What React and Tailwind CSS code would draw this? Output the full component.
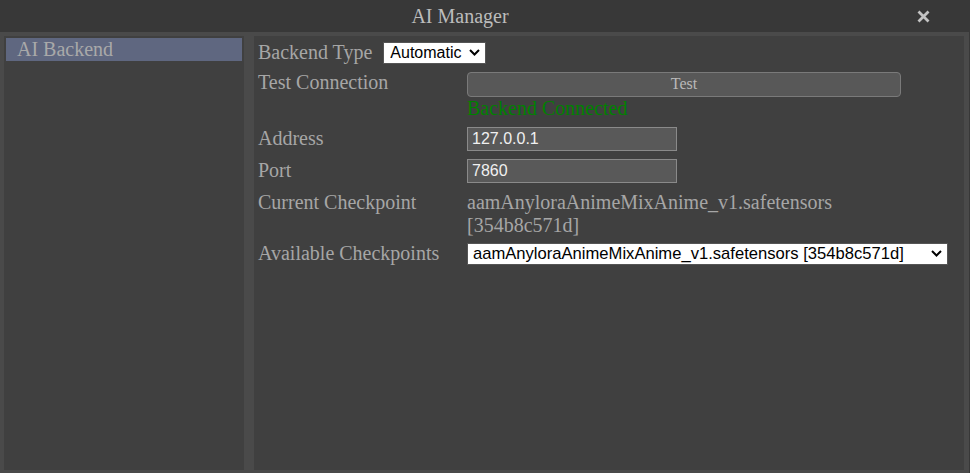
import React from "react";

function Chevron() {
  return (
    <svg width="11" height="7" viewBox="0 0 11 7" className="block">
      <path d="M1 1 L5.5 5.5 L10 1" fill="none" stroke="#000" strokeWidth="2" />
    </svg>
  );
}

function Select({ value, widthClass, padClass, sizeClass }) {
  return (
    <div className={`relative ${widthClass} h-[22px]`}>
      <select
        defaultValue={value}
        className={`block appearance-none w-full h-full bg-white text-black border border-[#555] ${padClass} ${sizeClass} leading-[20px] py-0`}
        style={{ fontFamily: '"Liberation Sans", Arial, sans-serif' }}
      >
        <option value={value}>{value}</option>
      </select>
      <span className="pointer-events-none absolute right-[6px] top-[7px]">
        <Chevron />
      </span>
    </div>
  );
}

function Input({ value }) {
  return (
    <input
      defaultValue={value}
      className="block w-[210px] h-[24px] bg-[#595959] border border-[#8a8a8a] pl-[4px] text-[16px] text-[#f0f0f0] outline-none"
      style={{ fontFamily: '"Liberation Sans", Arial, sans-serif' }}
    />
  );
}

export default function App() {
  return (
    <div
      className="w-[970px] h-[473px] bg-[#383838] flex flex-col text-[20px] leading-[23px] text-[#a6a6a6]"
      style={{ fontFamily: '"Liberation Serif", "Times New Roman", serif' }}
    >
      <div className="h-[32px] flex items-center shrink-0">
        <div className="w-[920px] text-center text-[#bcbcbc]">AI Manager</div>
        <button className="ml-[-3px] w-[13px] h-[13px] flex items-center justify-center">
          <svg width="13" height="13" viewBox="0 0 13 13">
            <path d="M1.5 1.5 L11.5 11.5 M11.5 1.5 L1.5 11.5" stroke="#c4c4c4" strokeWidth="2.8" strokeLinecap="butt" />
          </svg>
        </button>
      </div>
      <div className="flex-1 bg-[#4a4a4a] pt-[4px] pl-[4px] pr-[5px] pb-[3px] flex gap-[10px] border-r border-[#383838]">
        <div className="w-[240px] bg-[#404040] p-[2px]">
          <div className="h-[23px] bg-[#5f6780] pl-[11px] text-[#a9a9a9]">AI Backend</div>
        </div>
        <div className="flex-1 bg-[#404040] pt-[5px] pl-[4px]">
          <div className="flex items-center h-[23px]">
            <span>Backend Type</span>
            <div className="ml-[11px]">
              <Select value="Automatic" widthClass="w-[103px]" padClass="pl-[6px]" sizeClass="text-[16px]" />
            </div>
          </div>

          <div className="grid grid-cols-[209px_1fr] mt-[7px]">
            <div>Test Connection</div>
            <div>
              <button className="block mt-[1px] w-[434px] h-[25px] bg-[#585858] border border-[#7a7a7a] rounded-[4px] text-[16px] leading-[20px] text-[#b8b8b8] pb-[2px]">
                Test
              </button>
              <div className="text-[#008000]">Backend Connected</div>
            </div>
          </div>

          <div className="grid grid-cols-[209px_1fr] mt-[7px]">
            <div>Address</div>
            <div>
              <Input value="127.0.0.1" />
            </div>
          </div>

          <div className="grid grid-cols-[209px_1fr] mt-[8px]">
            <div>Port</div>
            <div>
              <Input value="7860" />
            </div>
          </div>

          <div className="grid grid-cols-[209px_1fr] mt-[8px]">
            <div>Current Checkpoint</div>
            <div>
              aamAnyloraAnimeMixAnime_v1.safetensors
              <br />
              [354b8c571d]
            </div>
          </div>

          <div className="grid grid-cols-[209px_1fr] mt-[5px]">
            <div>Available Checkpoints</div>
            <div className="pt-[1px]">
              <Select
                value="aamAnyloraAnimeMixAnime_v1.safetensors [354b8c571d]"
                widthClass="w-[481px]"
                padClass="pl-[5px]"
                sizeClass="text-[16.6px]"
              />
            </div>
          </div>
        </div>
      </div>
    </div>
  );
}
